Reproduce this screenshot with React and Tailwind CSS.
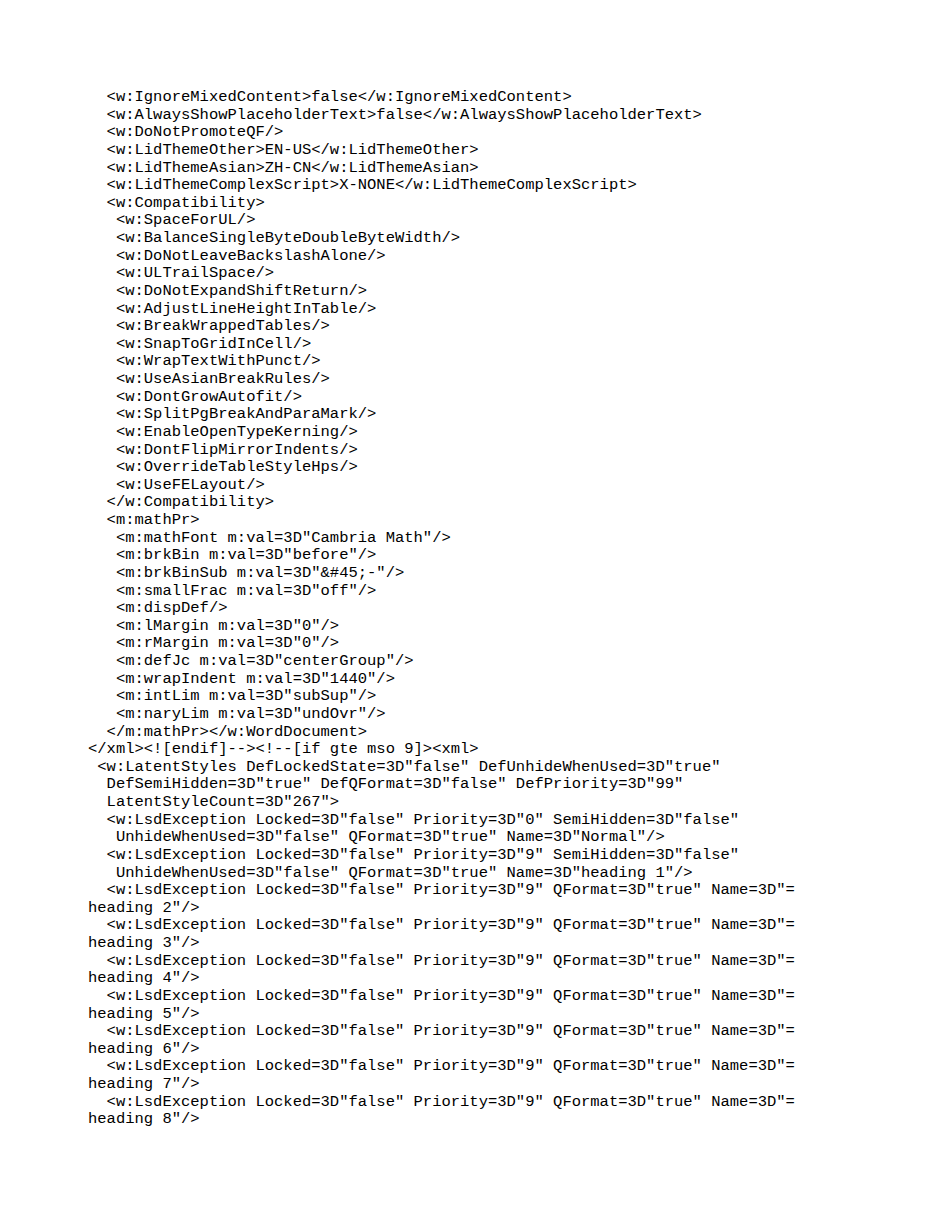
import React from 'react';

const lines = [
  '  <w:IgnoreMixedContent>false</w:IgnoreMixedContent>',
  '  <w:AlwaysShowPlaceholderText>false</w:AlwaysShowPlaceholderText>',
  '  <w:DoNotPromoteQF/>',
  '  <w:LidThemeOther>EN-US</w:LidThemeOther>',
  '  <w:LidThemeAsian>ZH-CN</w:LidThemeAsian>',
  '  <w:LidThemeComplexScript>X-NONE</w:LidThemeComplexScript>',
  '  <w:Compatibility>',
  '   <w:SpaceForUL/>',
  '   <w:BalanceSingleByteDoubleByteWidth/>',
  '   <w:DoNotLeaveBackslashAlone/>',
  '   <w:ULTrailSpace/>',
  '   <w:DoNotExpandShiftReturn/>',
  '   <w:AdjustLineHeightInTable/>',
  '   <w:BreakWrappedTables/>',
  '   <w:SnapToGridInCell/>',
  '   <w:WrapTextWithPunct/>',
  '   <w:UseAsianBreakRules/>',
  '   <w:DontGrowAutofit/>',
  '   <w:SplitPgBreakAndParaMark/>',
  '   <w:EnableOpenTypeKerning/>',
  '   <w:DontFlipMirrorIndents/>',
  '   <w:OverrideTableStyleHps/>',
  '   <w:UseFELayout/>',
  '  </w:Compatibility>',
  '  <m:mathPr>',
  '   <m:mathFont m:val=3D"Cambria Math"/>',
  '   <m:brkBin m:val=3D"before"/>',
  '   <m:brkBinSub m:val=3D"&#45;-"/>',
  '   <m:smallFrac m:val=3D"off"/>',
  '   <m:dispDef/>',
  '   <m:lMargin m:val=3D"0"/>',
  '   <m:rMargin m:val=3D"0"/>',
  '   <m:defJc m:val=3D"centerGroup"/>',
  '   <m:wrapIndent m:val=3D"1440"/>',
  '   <m:intLim m:val=3D"subSup"/>',
  '   <m:naryLim m:val=3D"undOvr"/>',
  '  </m:mathPr></w:WordDocument>',
  '</xml><![endif]--><!--[if gte mso 9]><xml>',
  ' <w:LatentStyles DefLockedState=3D"false" DefUnhideWhenUsed=3D"true"',
  '  DefSemiHidden=3D"true" DefQFormat=3D"false" DefPriority=3D"99"',
  '  LatentStyleCount=3D"267">',
  '  <w:LsdException Locked=3D"false" Priority=3D"0" SemiHidden=3D"false"',
  '   UnhideWhenUsed=3D"false" QFormat=3D"true" Name=3D"Normal"/>',
  '  <w:LsdException Locked=3D"false" Priority=3D"9" SemiHidden=3D"false"',
  '   UnhideWhenUsed=3D"false" QFormat=3D"true" Name=3D"heading 1"/>',
  '  <w:LsdException Locked=3D"false" Priority=3D"9" QFormat=3D"true" Name=3D"=',
  'heading 2"/>',
  '  <w:LsdException Locked=3D"false" Priority=3D"9" QFormat=3D"true" Name=3D"=',
  'heading 3"/>',
  '  <w:LsdException Locked=3D"false" Priority=3D"9" QFormat=3D"true" Name=3D"=',
  'heading 4"/>',
  '  <w:LsdException Locked=3D"false" Priority=3D"9" QFormat=3D"true" Name=3D"=',
  'heading 5"/>',
  '  <w:LsdException Locked=3D"false" Priority=3D"9" QFormat=3D"true" Name=3D"=',
  'heading 6"/>',
  '  <w:LsdException Locked=3D"false" Priority=3D"9" QFormat=3D"true" Name=3D"=',
  'heading 7"/>',
  '  <w:LsdException Locked=3D"false" Priority=3D"9" QFormat=3D"true" Name=3D"=',
  'heading 8"/>',
];

export default function App() {
  return (
    <div className="w-[950px] h-[1230px] bg-white overflow-hidden">
      <pre className="pl-[88px] pt-[89px] text-[15.5px] leading-[17.63px] text-black font-['Liberation_Mono',monospace] whitespace-pre">
        {lines.join('\n')}
      </pre>
    </div>
  );
}
